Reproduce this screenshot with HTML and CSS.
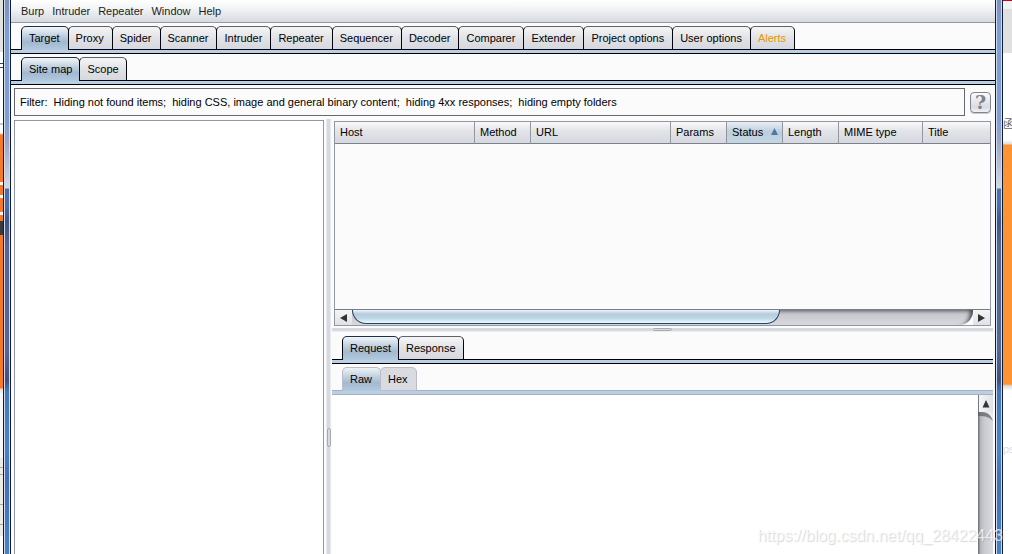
FILE: index.html
```html
<!DOCTYPE html>
<html lang="en">
<head>
<meta charset="utf-8">
<title>Burp Suite</title>
<link rel="stylesheet" href="styles.css">
</head>
<body>
<div class="screen">
  <div class="desktop desktop-left"></div>
  <div class="edge"></div>
  <main class="window">
    <nav class="menubar">
      <button>Burp</button><button>Intruder</button><button>Repeater</button><button>Window</button><button>Help</button>
    </nav>
    <div class="tabs roomy" role="tablist">
      <button class="tab selected" role="tab" aria-selected="true">Target</button>
      <button class="tab" role="tab">Proxy</button>
      <button class="tab" role="tab">Spider</button>
      <button class="tab" role="tab">Scanner</button>
      <button class="tab" role="tab">Intruder</button>
      <button class="tab" role="tab">Repeater</button>
      <button class="tab" role="tab">Sequencer</button>
      <button class="tab" role="tab">Decoder</button>
      <button class="tab" role="tab">Comparer</button>
      <button class="tab" role="tab">Extender</button>
      <button class="tab" role="tab">Project options</button>
      <button class="tab" role="tab">User options</button>
      <button class="tab alert" role="tab">Alerts</button>
    </div>
    <div class="tabs" role="tablist">
      <button class="tab selected" role="tab" aria-selected="true">Site map</button>
      <button class="tab" role="tab">Scope</button>
    </div>
    <div class="filter-row">
      <button class="filter">Filter:&nbsp; Hiding not found items;&nbsp; hiding CSS, image and general binary content;&nbsp; hiding 4xx responses;&nbsp; hiding empty folders</button>
      <button class="help" aria-label="Help on this panel">?</button>
    </div>
    <div class="panes">
      <div class="tree"></div>
      <div class="split split-v"><span class="grip"></span></div>
      <div class="right">
        <div class="list">
          <table class="requests">
            <colgroup><col class="wide"><col class="narrow"><col class="wide"><col class="narrow"><col class="narrow"><col class="narrow"><col class="medium"><col></colgroup>
            <thead>
              <tr><th>Host</th><th>Method</th><th>URL</th><th>Params</th><th class="sorted" aria-sort="ascending"><span class="sort">Status<svg width="7" height="7" viewBox="0 0 7 7"><path d="M3.5 0L7 7H0z" fill="#4c7aa8"/></svg></span></th><th>Length</th><th>MIME type</th><th>Title</th></tr>
            </thead>
          </table>
          <div class="rows"></div>
          <div class="hscroll">
            <button class="arrow" aria-label="Scroll left"><svg width="7" height="8" viewBox="0 0 7 8"><path d="M7 0v8L0 4z" fill="#333"/></svg></button>
            <div class="track"><div class="thumb"></div></div>
            <button class="arrow arrow-right" aria-label="Scroll right"><svg width="7" height="8" viewBox="0 0 7 8"><path d="M0 0v8l7-4z" fill="#333"/></svg></button>
          </div>
        </div>
        <div class="split split-h"><span class="grip"></span></div>
        <div class="tabs" role="tablist">
          <button class="tab selected" role="tab" aria-selected="true">Request</button>
          <button class="tab" role="tab">Response</button>
        </div>
        <div class="tabs roomy faint" role="tablist">
          <button class="tab selected" role="tab" aria-selected="true">Raw</button>
          <button class="tab" role="tab">Hex</button>
        </div>
        <div class="editor">
          <textarea class="message" aria-label="Raw request" readonly></textarea>
          <div class="vscroll">
            <button class="arrow arrow-up" aria-label="Scroll up"><svg width="8" height="8" viewBox="0 0 8 8"><path d="M4 0l3.500 7.500h-7z" fill="#333"/></svg></button>
            <svg class="curve" width="15" height="9" viewBox="0 0 15 9"><path d="M1 0h14v9C13 3 9 0 4 0z" fill="#e9eaed"/><path d="M0 0h4c5 0 9 3 11 9C11 5 8 4 0 4z" fill="#55565c" opacity=".65"/></svg>
          </div>
        </div>
      </div>
    </div>
  </main>
  <div class="edge"></div>
  <div class="desktop desktop-right">
    <span class="page-text page-title">函数</span>
    <span class="page-text page-note">ps</span>
  </div>
  <div class="watermark">https://blog.csdn.net/qq_28422443</div>
</div>
</body>
</html>
```
FILE: styles.css
```css
* { box-sizing: border-box; }

body {
  margin: 0;
  font: 11px/14px "Liberation Sans", Arial, "Noto Sans CJK SC", sans-serif;
  color: #000;
  background: #fff;
}

button {
  font: inherit;
  color: inherit;
  margin: 0;
  border: 0;
  background: none;
  white-space: nowrap;
}

svg { display: block; }

.screen {
  position: relative;
  display: flex;
  height: 100vh;
  overflow: hidden;
}

.desktop { position: relative; overflow: hidden; flex: none; }

.desktop-left {
  width: 3px;
  background: linear-gradient(#e2e2df 52px, #fff 52px 63px, #34465f 63px 64px, #fff 64px 67px, #34465f 67px 68px, #fff 68px 123px, #999 124px, #fff 125px 133px, #f47a2a 135px 182px, #fff 182px 185px, #f47a2a 185px 195px, #fff 195px 198px, #f47a2a 198px 212px, #fff 212px 215px, #f47a2a 215px 221px, #3b3b3b 221px 235px, #f47a2a 235px 388px, #ddd 389px, #f8f8f8 394px 458px, #ecebe7 458px 467px, #aaa 467px 468px, #ecebe7 468px 474px, #aaa 474px 475px, #ecebe7 475px 504px, #aaa 504px 505px, #ecebe7 505px 524px, #aaa 524px 525px, #ecebe7 525px 536px, #fff 536px);
}

.desktop-right {
  width: 9px;
  background: linear-gradient(#d0021b 1px, #f2f2f2 1px 9px, #e0e0e0 9px 53px, #fff 53px 140px, #ddd 144px, #fd9332 145px 384px, #ddd 386px, #fff 391px);
}

.page-text { position: absolute; left: 0; font-size: 11px; color: #666; white-space: nowrap; }
.page-title { top: 117px; }
.page-note { top: 442px; color: #ddd; }

.edge {
  flex: none;
  width: 8px;
  border: solid #101c33;
  border-width: 0 1px;
  background:
    linear-gradient(90deg, #cfdcf0 1px, transparent 1px 5px, #cfdcf0 5px),
    linear-gradient(#8090bd, #7f9fd3 30px 120px, #9ba4c2 140px, #d4d9e5 188px, #4c6fa9 189px, #4c6fa9 205px, #405587 222px, #566592 245px, #566592 350px, #414f80 380px, #4577bb 392px, #4e81c6 450px, #4271b4 480px, #4c80c5);
}

.window {
  flex: 1;
  min-width: 0;
  display: flex;
  flex-direction: column;
  background: #fbfbfc;
}

.menubar {
  display: flex;
  gap: 8px;
  padding: 4px 10px;
  border-bottom: 1px solid #9298a5;
  background: linear-gradient(#fff, #f2f3f5 9px, #d6d9df);
}
.menubar button { padding: 0; color: #222; }

.tabs {
  display: flex;
  flex: none;
  height: 31px;
  padding: 3px 10px 0;
  background: linear-gradient(transparent 26px, #000 26px 27px, #b8cfe5 27px 30px, #000 30px);
}

.tab {
  height: 24px;
  padding: 0 7px 1px;
  border: 1px solid #05050f;
  border-top-color: #5e626b;
  border-radius: 5px 5px 0 0;
  background: linear-gradient(#f5f5f7, #e0e1e5 12px, #d7d8de);
}
.roomy .tab { padding-right: 8px; }
.tab + .tab { margin-left: -1px; }
.tab.selected {
  border-bottom: 0;
  padding-bottom: 2px;
  border-top-color: #1d3248;
  background: linear-gradient(#f3f6f9, #c5d3e1 8px, #a3b9cf 15px, #b3c9de);
}
.tab.alert { color: #e59700; }

.filter-row {
  display: flex;
  align-items: center;
  gap: 5px;
  padding: 3px 4px 3px 3px;
}
.filter {
  flex: 1;
  min-width: 0;
  overflow: hidden;
  height: 28px;
  padding: 0 5px;
  border: 1px solid #66686e;
  text-align: left;
}
.help {
  width: 21px;
  height: 21px;
  padding: 0;
  border: 1px solid #81858e;
  border-radius: 4px;
  background: linear-gradient(#fbfbfc, #d9dbe1 14px, #f1f2f5);
  font: bold 19px/18px "DejaVu Serif", serif;
  color: #808288;
  box-shadow: 0 1px #c9ccd2;
}

.panes {
  flex: 1;
  min-height: 0;
  display: grid;
  grid-template-columns: 313px 8px 1fr;
}
.tree {
  margin: 1px 0 0 3px;
  border: 1px solid #9297a1;
  border-bottom: 0;
  background: #fff;
}
.split { display: flex; align-items: center; justify-content: center; }
.split-v { background: linear-gradient(90deg, transparent 2px, #e8eaef 2px 3px, #d6d9e0 3px 6px, #e8eaef 6px 7px, transparent 7px); }
.split-h { flex: none; height: 7px; background: linear-gradient(transparent 2px, #d6d9e0 2px 5px, #eceef2 5px 6px, transparent 6px); }
.grip { border: 1px solid #a5aab6; border-radius: 2px; background: #d6d9e0; }
.split-v .grip { width: 4px; height: 19px; margin: 202px 0 0 2px; }
.split-h .grip { width: 19px; height: 3px; }

.right {
  display: flex;
  flex-direction: column;
  min-width: 0;
  margin-right: 2px;
}
.list {
  flex: none;
  display: flex;
  flex-direction: column;
  height: 205px;
  margin: 2px 2px 0;
  border: 1px solid #9297a1;
}
.requests {
  width: 100%;
  table-layout: fixed;
  border-collapse: separate;
  border-spacing: 0;
}
.wide { width: 140px; }
.narrow { width: 56px; }
.medium { width: 84px; }
.requests th {
  height: 22px;
  padding: 0 4px 2px 5px;
  border-right: 1px solid #93969e;
  border-bottom: 1px solid #7c8088;
  background: linear-gradient(#f9f9fb, #e3e4e9 9px, #d5d8df);
  font-weight: normal;
  text-align: left;
}
.requests th:last-child { border-right: 0; }
.requests th.sorted { background: linear-gradient(#e8eff5, #bccddb 10px, #c4d5e3); }
.sort { display: flex; align-items: center; justify-content: space-between; }
.rows { flex: 1; }

.hscroll { display: flex; height: 16px; border-top: 1px solid #7a7d84; }
.arrow {
  flex: none;
  display: flex;
  align-items: center;
  justify-content: center;
  width: 17px;
  padding: 0;
  background: linear-gradient(#f5f5f7, #dfe1e5);
}
.track {
  flex: 1;
  background: linear-gradient(#a9abb1, #c8c9cf 4px, #d8d9de);
  border-radius: 0 0 14px 0;
  box-shadow: inset -5px 2px 4px -2px #45464b;
}
.thumb {
  width: 69%;
  height: 14px;
  border: 1px solid #25435b;
  border-top: 0;
  border-radius: 0 0 14px 14px;
  background: linear-gradient(#eef5fa, #b6cbdd 4px, #bdd5e6 8px, #eafaff);
}

.faint { background: linear-gradient(transparent 26px, #a9b0bd 26px 27px, #b8cfe5 27px 30px, #a9b0bd 30px); }
.faint .tab { border-color: #b8bdc8; background: #dadbe1; }
.faint .tab.selected { background: linear-gradient(#eef2f6, #c5d3e1 8px, #a3b9cf 15px, #b3c9de); }

.editor { flex: 1; min-height: 0; display: flex; background: #fff; }
.message { flex: 1; min-width: 0; border: 0; padding: 4px; resize: none; outline: 0; background: #fff; }
.vscroll {
  width: 15px;
  background: linear-gradient(90deg, #77797f 1px, #b1b2b8 2px, #c9cad0 6px, #d9dae0);
}
.arrow-up { width: 14px; height: 17px; margin-left: 1px; background: linear-gradient(90deg, #f5f5f7, #dfe1e5); }

.watermark {
  position: absolute;
  right: 9px;
  bottom: 8px;
  font-size: 16px;
  line-height: 20px;
  color: rgba(255, 255, 255, .7);
  text-shadow: 1px 1px 1px rgba(120, 120, 120, .3);
}
```
